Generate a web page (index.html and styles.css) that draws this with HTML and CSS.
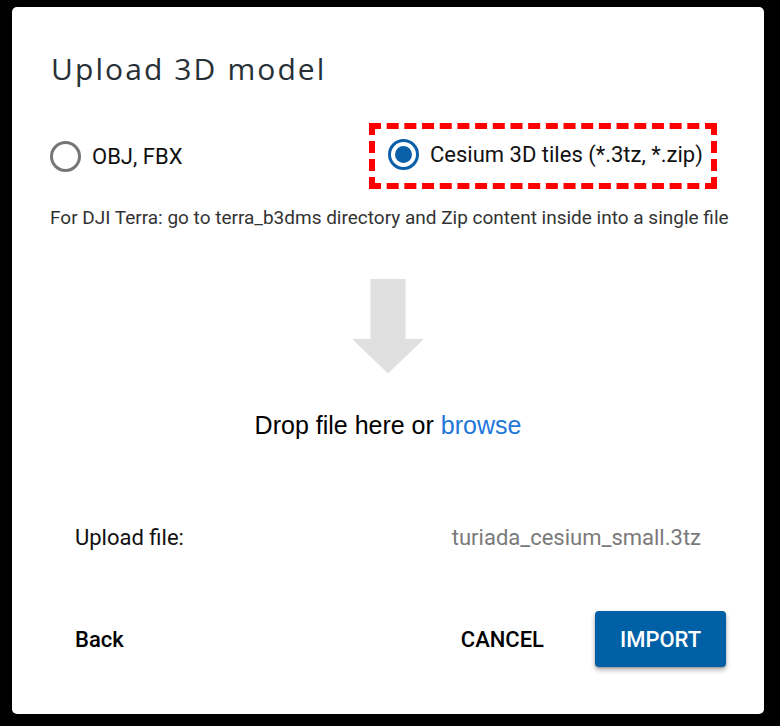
FILE: index.html
```html
<!DOCTYPE html>
<html>
<head>
<meta charset="utf-8">
<link rel="stylesheet" href="styles.css">
</head>
<body>
<div class="card">
  <h1 class="title">Upload 3D model</h1>
  <div class="options">
    <label class="option option-first">
      <span class="radio"></span>
      <span class="option-text">OBJ, FBX</span>
    </label>
    <label class="option option-marked">
      <span class="radio radio-on"></span>
      <span class="option-text">Cesium 3D tiles (*.3tz, *.zip)</span>
    </label>
  </div>
  <p class="hint">For DJI Terra: go to terra_b3dms directory and Zip content inside into a single file</p>
  <div class="drop">
    <svg class="drop-arrow" width="72" height="95" viewBox="0 0 72 95">
      <path d="M18.5 0 H53.5 V60 H72 L36 94.5 L0 60 H18.5 Z" fill="#e0e0e0"/>
    </svg>
    <div class="drop-text">Drop file here or <span class="browse">browse</span></div>
  </div>
  <div class="file-row">
    <span class="file-label">Upload file:</span>
    <span class="file-name">turiada_cesium_small.3tz</span>
  </div>
  <div class="footer">
    <button class="btn btn-text btn-back">Back</button>
    <div class="footer-right">
      <button class="btn btn-text">CANCEL</button>
      <button class="btn btn-primary">IMPORT</button>
    </div>
  </div>
</div>
</body>
</html>
```

FILE: styles.css
```css
html, body {
  margin: 0;
  padding: 0;
  background: #000;
}
body {
  width: 780px;
  height: 726px;
  overflow: hidden;
}
.card {
  box-sizing: border-box;
  margin: 7px 0 0 12px;
  width: 752px;
  height: 707px;
  background: #fff;
  border-radius: 5px;
  padding: 42px 38px 0 38px;
  display: flex;
  flex-direction: column;
  font-family: Roboto, "Liberation Sans", sans-serif;
}
.title {
  margin: 0 0 0 1px;
  font-family: "Open Sans", sans-serif;
  font-weight: 400;
  font-size: 30px;
  line-height: 40px;
  color: #263036;
  letter-spacing: 2.1px;
}
.options {
  display: flex;
  align-items: center;
  margin-top: 34px;
  height: 66px;
}
.option {
  display: flex;
  align-items: center;
  gap: 11px;
}
.option-first {
  width: 319px;
}
.option-marked {
  box-sizing: border-box;
  height: 66px;
  width: 348px;
  border: 6px dashed #ff0000;
  padding: 0 0 4px 13px;
}
.radio {
  box-sizing: border-box;
  width: 31px;
  height: 31px;
  border: 3px solid #767676;
  border-radius: 50%;
  display: flex;
  align-items: center;
  justify-content: center;
}
.radio-on {
  border-color: #0b5ea8;
}
.radio-on::after {
  content: "";
  width: 17px;
  height: 17px;
  border-radius: 50%;
  background: #0b5ea8;
}
.option-text {
  font-size: 22px;
  color: #111;
}
.hint {
  margin: 17px 0 0 0;
  font-size: 19px;
  line-height: 24px;
  color: #333;
  white-space: nowrap;
}
.drop {
  display: flex;
  flex-direction: column;
  align-items: center;
  margin-top: 49px;
}
.drop-arrow {
  display: block;
}
.drop-text {
  margin-top: 35px;
  font-family: "Liberation Sans", Arial, sans-serif;
  font-size: 25px;
  line-height: 32px;
  color: #000;
}
.browse {
  color: #2176d9;
}
.file-row {
  display: flex;
  justify-content: space-between;
  margin: 83px 25px 0 25px;
  font-size: 22px;
  line-height: 28px;
}
.file-label {
  color: #111;
}
.file-name {
  color: #7a7a7a;
}
.footer {
  display: flex;
  justify-content: space-between;
  align-items: center;
  margin: 59px 0 0 25px;
}
.footer-right {
  display: flex;
  align-items: center;
}
.btn {
  font-family: Roboto, sans-serif;
  font-size: 22px;
  font-weight: 500;
  border: none;
  background: none;
  padding: 0;
  cursor: pointer;
}
.btn-text {
  color: #000;
  height: 56px;
}
.footer-right .btn-text {
  padding: 0 51px 0 0;
}
.btn-primary {
  width: 131px;
  height: 56px;
  background: #0060a6;
  color: #fff;
  border-radius: 4px;
  box-shadow: 0 3px 5px rgba(0,0,0,0.3), 0 1px 2px rgba(0,0,0,0.2);
}
```
